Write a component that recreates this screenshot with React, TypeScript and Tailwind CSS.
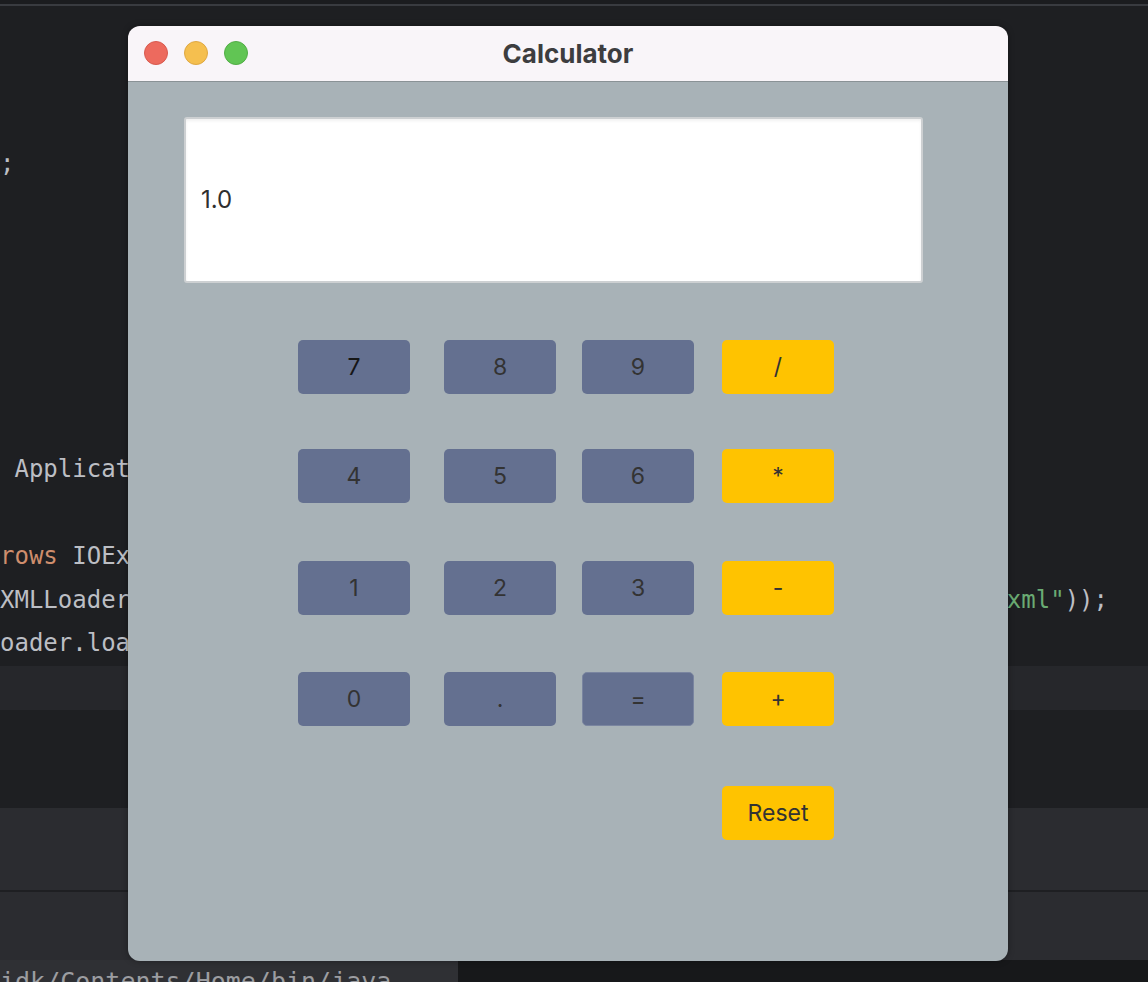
import React from "react";

const mono = { fontFamily: '"DejaVu Sans Mono", "Liberation Mono", monospace' };

function CodeLine({ children }: { children?: React.ReactNode }) {
  return (
    <div className="h-[43.7px] leading-[43.7px] whitespace-pre text-[24px] text-[#bcbec4] flex">
      {children}
    </div>
  );
}

function Btn({ label, yellow, dark, className }: { label: string; yellow?: boolean; dark?: boolean; className?: string }) {
  return (
    <div
      className={
        "w-[112px] h-[54px] rounded-[5px] flex items-center justify-center text-[23px] " +
        (yellow ? "bg-[#ffc300] " : "bg-[#647090] ") +
        (dark ? "text-[#161616] " : "text-[#333333] ") +
        (className ?? "")
      }
    >
      {label}
    </div>
  );
}

export default function App() {
  return (
    <div className="relative w-[1148px] h-[982px] overflow-hidden bg-[#1e1f22]">
      {/* IDE background */}
      <div className="flex flex-col" style={mono}>
        <div className="h-[4px] bg-[#1b1c1f]" />
        <div className="h-[2px] bg-[#393b40]" />
        <div className="h-[660px] pt-[137px] flex flex-col">
          <CodeLine>;</CodeLine>
          <CodeLine />
          <CodeLine />
          <CodeLine />
          <CodeLine />
          <CodeLine />
          <CodeLine />
          <CodeLine> Application</CodeLine>
          <CodeLine />
          <CodeLine>
            <span className="text-[#cf8e6d]">rows</span> IOException {"{"}
          </CodeLine>
          <CodeLine>
            <span className="flex-1">XMLLoader fxmlLoader</span>
            <span className="mr-[40px]">
              <span className="text-[#6aab73]">xml"</span>));
            </span>
          </CodeLine>
          <CodeLine>oader.load()</CodeLine>
        </div>
        <div className="h-[44px] bg-[#26272b]" />
        <div className="h-[98px] bg-[#1e1f22]" />
        <div className="h-[82px] bg-[#2b2c30]" />
        <div className="h-[2px] bg-[#1e1f22]" />
        <div className="h-[68px] bg-[#2b2c30]" />
        <div className="h-[22px] flex">
          <div className="w-[458px] bg-[#2f3034] overflow-hidden">
            <div className="text-[25px] leading-[22px] pt-[11px] text-[#9c9da1] whitespace-pre">idk/Contents/Home/bin/java</div>
          </div>
          <div className="flex-1 bg-[#17181a]" />
        </div>
      </div>

      {/* Calculator window */}
      <div
        className="absolute left-[128px] top-[26px] w-[880px] h-[935px] rounded-[12px] overflow-hidden flex flex-col shadow-[0_0_6px_rgba(0,0,0,0.35)]"
        style={{ fontFamily: 'Inter, "Noto Sans", "Liberation Sans", sans-serif' }}
      >
        <div className="relative h-[56px] shrink-0 bg-[#f9f5f9] border-b border-[#8a9296] flex items-center justify-center">
          <div className="absolute left-[16px] top-[15px] flex gap-[16px]">
            <div className="w-[24px] h-[24px] rounded-full bg-[#ed6a5e] border border-[#d85a4f]" />
            <div className="w-[24px] h-[24px] rounded-full bg-[#f5bf4f] border border-[#dfa843]" />
            <div className="w-[24px] h-[24px] rounded-full bg-[#61c554] border border-[#52ad46]" />
          </div>
          <div className="text-[26px] font-bold text-[#3d3d3f] leading-none mt-[1px]">Calculator</div>
        </div>
        <div className="flex-1 bg-[#a8b2b7] flex flex-col">
          <div className="ml-[56px] mt-[35px] w-[739px] h-[166px] bg-white border-2 border-[#cdd0d2] rounded-[3px] flex items-center pl-[15px] shadow-[inset_0_2px_3px_rgba(0,0,0,0.06)]">
            <span className="text-[24px] text-[#2f2f2f]">1.0</span>
          </div>

          <div className="flex flex-col pl-[170px]">
            <div className="flex mt-[57px]">
              <Btn label="7" dark />
              <Btn label="8" className="ml-[34px]" />
              <Btn label="9" className="ml-[26px]" />
              <Btn label="/" yellow className="ml-[28px]" />
            </div>
            <div className="flex mt-[55px]">
              <Btn label="4" />
              <Btn label="5" className="ml-[34px]" />
              <Btn label="6" className="ml-[26px]" />
              <Btn label="*" yellow className="ml-[28px]" />
            </div>
            <div className="flex mt-[58px]">
              <Btn label="1" />
              <Btn label="2" className="ml-[34px]" />
              <Btn label="3" className="ml-[26px]" />
              <Btn label="-" yellow className="ml-[28px]" />
            </div>
            <div className="flex mt-[57px]">
              <Btn label="0" />
              <Btn label="." className="ml-[34px]" />
              <Btn label="=" className="ml-[26px] border border-[#7a85a0]" />
              <Btn label="+" yellow className="ml-[28px]" />
            </div>
            <div className="flex mt-[60px] pl-[424px]">
              <Btn label="Reset" yellow />
            </div>
          </div>
        </div>
      </div>
    </div>
  );
}
